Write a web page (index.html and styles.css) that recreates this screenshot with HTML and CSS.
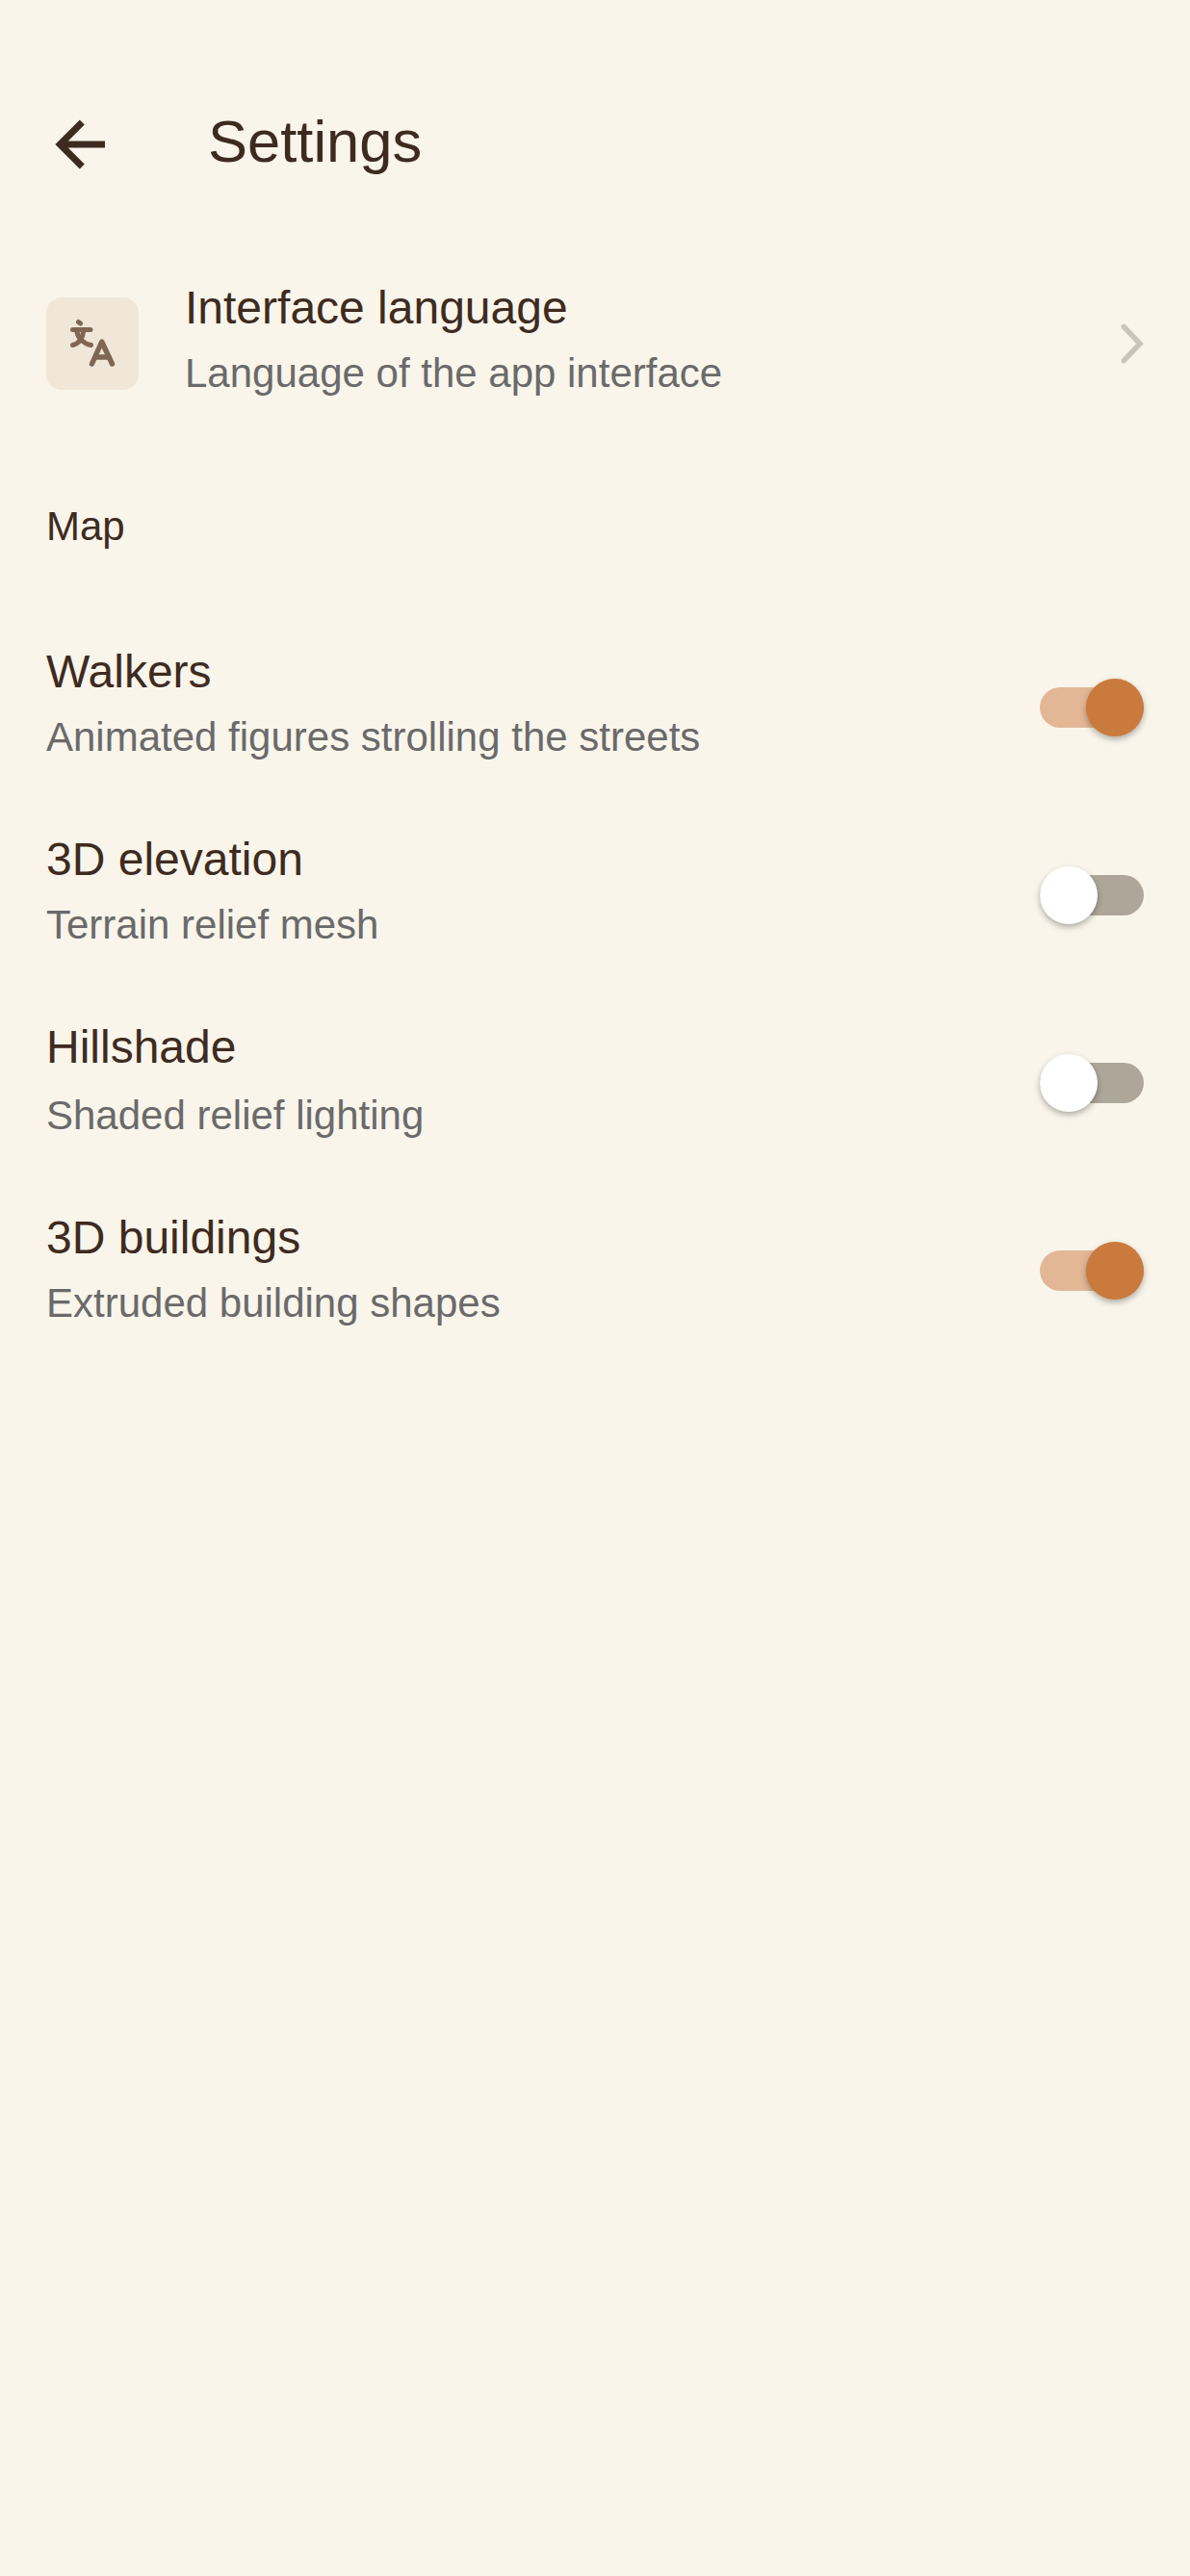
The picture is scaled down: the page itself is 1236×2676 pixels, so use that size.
FILE: index.html
```html
<!DOCTYPE html>
<html lang="en">
<head>
<meta charset="utf-8">
<title>Settings</title>
<link rel="stylesheet" href="styles.css">
</head>
<body>
<main class="screen">
  <header class="topbar">
    <svg class="back" width="120" height="96" viewBox="0 0 120 96" aria-hidden="true"><path d="M53.3 28 L30.3 51 L53.3 74 M30.3 51 H77" fill="none" stroke="#3e2b1f" stroke-width="7"/></svg>
    <h1 class="page-title">Settings</h1>
  </header>
  <section class="lang-row">
    <div class="lang-icon">
      <svg width="96" height="96" viewBox="0 0 96 96" aria-hidden="true"><g fill="none" stroke="#7f6753" stroke-linecap="round" stroke-linejoin="round"><g stroke-width="5"><path d="M33.5 25.5 L35.5 27"/><path d="M27.5 33.5 H46"/><path d="M32 36 C33 42 39 48 46.5 49.5"/><path d="M38.5 36 C38 42 34 48 27.5 49.5"/></g><g stroke-width="5.4"><path d="M47.5 69 L57.7 46 L68.5 69"/><path d="M51 62 H65"/></g></g></svg>
    </div>
    <div class="texts lang-texts">
      <div class="title">Interface language</div>
      <div class="sub">Language of the app interface</div>
    </div>
    <svg class="chevron" width="24" height="42" viewBox="0 0 24 42" aria-hidden="true"><path d="M3.3 3.3 L20 21 L3.3 38.7" fill="none" stroke="#cbc4ba" stroke-width="5.5" stroke-linecap="round" stroke-linejoin="miter"/></svg>
  </section>
  <h2 class="section">Map</h2>
  <section class="rows">
    <div class="row">
      <div class="texts"><div class="title">Walkers</div><div class="sub">Animated figures strolling the streets</div></div>
      <div class="switch on"><span class="track"></span><span class="thumb"></span></div>
    </div>
    <div class="row">
      <div class="texts"><div class="title">3D elevation</div><div class="sub">Terrain relief mesh</div></div>
      <div class="switch"><span class="track"></span><span class="thumb"></span></div>
    </div>
    <div class="row">
      <div class="texts"><div class="title">Hillshade</div><div class="sub sub-low">Shaded relief lighting</div></div>
      <div class="switch"><span class="track"></span><span class="thumb"></span></div>
    </div>
    <div class="row">
      <div class="texts texts-low"><div class="title">3D buildings</div><div class="sub">Extruded building shapes</div></div>
      <div class="switch on"><span class="track"></span><span class="thumb"></span></div>
    </div>
  </section>
</main>
</body>
</html>
```
FILE: styles.css
```css
* { box-sizing: border-box; }
html, body { margin: 0; padding: 0; }
body {
  background: #f9f5eb;
  font-family: "Liberation Sans", Arial, sans-serif;
  color: #3e2b1f;
}
.screen { height: 2676px; overflow: hidden; display: flex; flex-direction: column; }
.topbar {
  display: flex;
  align-items: flex-start;
  height: 97px;
  margin-top: 99px;
  padding-left: 32px;
}
.back { flex: none; }
.page-title {
  margin: 0 0 0 64px;
  font-size: 61.5px;
  font-weight: 400;
  line-height: 95px;
}
.lang-row {
  display: flex;
  align-items: center;
  height: 168px;
  margin-top: 77px;
  padding: 0 48px;
}
.lang-icon {
  flex: none;
  width: 96px;
  height: 96px;
  border-radius: 16px;
  background: #f0e7d8;
}
.lang-icon svg { display: block; }
.lang-texts { margin-left: 48px; flex: 1; padding-bottom: 6px; }
.texts { display: flex; flex-direction: column; }
.texts-low { margin-top: 3px; }
.title { font-size: 48px; line-height: 67px; white-space: nowrap; }
.sub { font-size: 42px; line-height: 69px; color: #6a6a6a; white-space: nowrap; }
.sub-low { margin-top: 3px; }
.chevron { flex: none; }
.section {
  margin: 76px 0 0 48px;
  font-size: 42px;
  font-weight: 400;
  line-height: 59px;
}
.rows { margin-top: 61px; display: flex; flex-direction: column; }
.row {
  display: flex;
  justify-content: space-between;
  align-items: flex-start;
  height: 195px;
  padding: 27px 48px 0;
}
.switch {
  position: relative;
  width: 108px;
  height: 60px;
  margin-top: 41px;
  flex: none;
}
.track {
  position: absolute;
  left: 0;
  top: 9px;
  width: 108px;
  height: 42px;
  border-radius: 21px;
  background: #afa69a;
}
.thumb {
  position: absolute;
  left: 0;
  top: 0;
  width: 60px;
  height: 60px;
  border-radius: 50%;
  background: #fff;
  box-shadow: 0 3px 6px rgba(0,0,0,.3);
}
.switch.on .track { background: #e3b796; }
.switch.on .thumb { left: 48px; background: #ca7a3c; }
```
